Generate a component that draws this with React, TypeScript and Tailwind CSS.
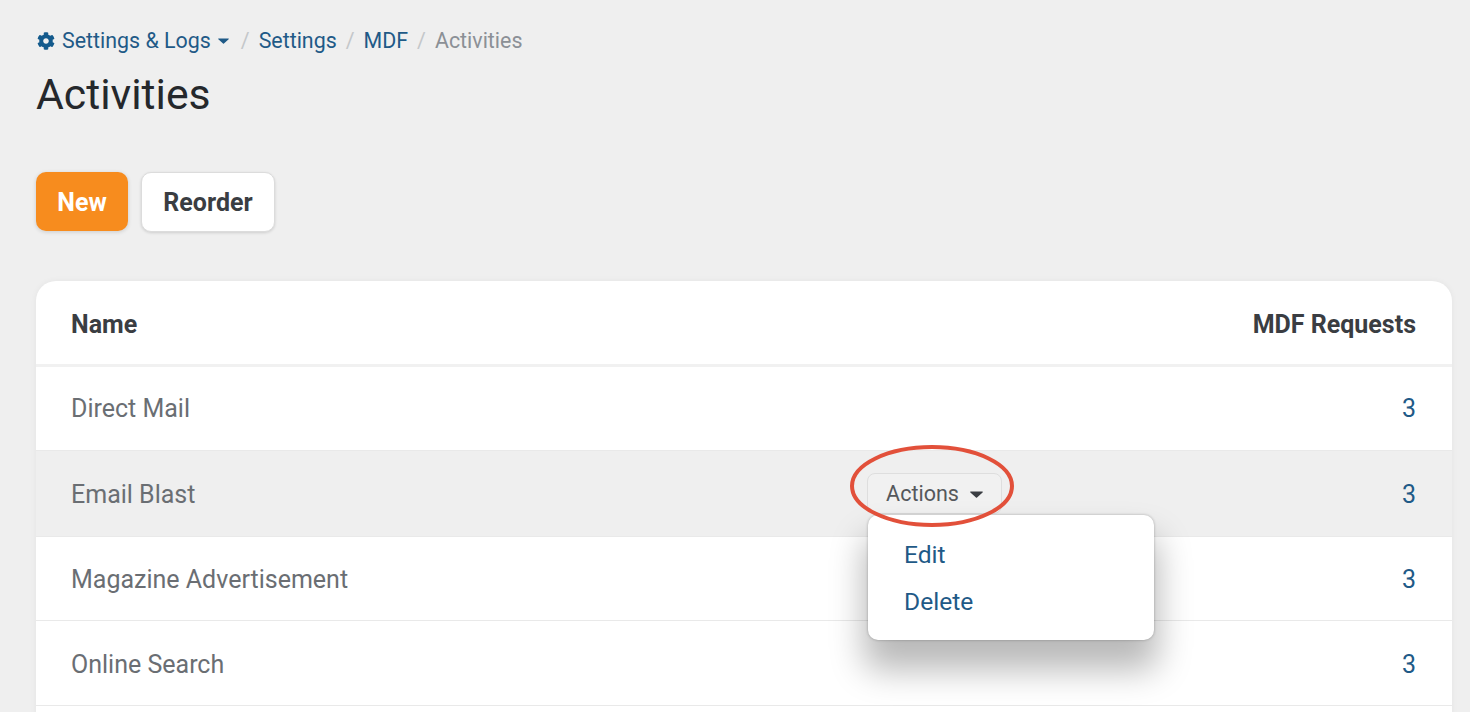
import { FaCog } from "react-icons/fa";

const rows = ["Direct Mail", "Email Blast", "Magazine Advertisement", "Online Search", ""];
const heights = ["h-[84px] pt-[1px]", "h-[86px] pt-[2px]", "h-[84px] pt-[2px]", "h-[85px] pt-[4px]", "h-[85px]"];

function Caret({ className }: { className: string }) {
  return (
    <svg viewBox="0 0 10 6" className={className} fill="currentColor" preserveAspectRatio="none">
      <path d="M0.6 0.4h8.8c.4 0 .6.5.3.8L5.4 5.5a.6.6 0 0 1-.8 0L.3 1.2C0 .9.2.4.6.4z" />
    </svg>
  );
}

function Sep() {
  return <span className="mx-[9px] text-[#c4c7ca]">/</span>;
}

export default function App() {
  return (
    <div className="h-[712px] overflow-hidden bg-[#efefef] pl-[36px] pr-[18px] pt-[27px] font-['Roboto',sans-serif]">
      <nav className="flex h-[28px] items-center text-[21.4px] leading-[28px] text-[#1f5a87]">
        <FaCog className="mr-[7px] ml-[1px] h-[18px] w-[18px] text-[#135a8c]" />
        <span>Settings &amp; Logs</span>
        <Caret className="ml-[7px] mr-[3px] h-[6px] w-[11px]" />
        <Sep />
        <span>Settings</span>
        <Sep />
        <span>MDF</span>
        <Sep />
        <span className="text-[#8b9096]">Activities</span>
      </nav>
      <h1 className="mt-[11px] text-[42.7px] leading-[56px] font-normal text-[#25282c]">Activities</h1>
      <div className="mt-[50px] flex gap-[13px]">
        <button className="h-[59px] w-[92px] rounded-[10px] bg-[#f78c1e] pt-[3px] text-[25px] font-bold text-white shadow-[0_1px_4px_rgba(0,0,0,0.15)]">
          New
        </button>
        <button className="h-[60px] w-[134px] rounded-[10px] border border-[#dcdcdc] bg-white pt-[1px] text-[25px] font-bold text-[#3a3d42] shadow-[0_1px_3px_rgba(0,0,0,0.14)]">
          Reorder
        </button>
      </div>
      <div className="relative mt-[49px] rounded-t-[20px] bg-white shadow-[0_0_6px_rgba(0,0,0,0.05)]">
        <div className="flex h-[83px] items-center justify-between pl-[35px] pr-[36px] pt-[5px] text-[25px] font-bold text-[#3a3d42]">
          <span>Name</span>
          <span>MDF Requests</span>
        </div>
        <div className="h-[3px] bg-[#f1f1f1]" />
        {rows.map((r, i) => (
          <div
            key={i}
            className={`relative flex items-center justify-between border-b border-[#e9e9e9] pl-[35px] pr-[36px] text-[25px] text-[#6a6e73] ${heights[i]} ${i === 1 ? "bg-[#efefef]" : ""}`}
          >
            {r && <span>{r}</span>}
            {r && <span className="text-[#1f5a87]">3</span>}
            {i === 1 && (
              <>
                <button className="absolute left-[831px] top-[22px] flex h-[41px] w-[135px] items-center justify-center gap-[11px] rounded-[8px] border border-[#dedede] bg-[#f1f1f1] pt-[2px] text-[21.5px] text-[#55585c]">
                  Actions
                  <Caret className="h-[7px] w-[13px] text-[#3a3d42]" />
                </button>
                <div className="absolute left-[832px] top-[64px] z-10 flex h-[125px] w-[286px] flex-col rounded-[10px] bg-white pl-[36px] pt-[24px] text-[24.6px] leading-[47px] text-[#1f5a87] shadow-[0_0_3px_rgba(0,0,0,0.28),0_26px_34px_4px_rgba(0,0,0,0.28)]">
                  <span className="-mt-[8px]">Edit</span>
                  <span>Delete</span>
                </div>
                <svg className="absolute left-[812px] top-[-8px] z-20 h-[90px] w-[168px]" viewBox="0 0 168 90" fill="none">
                  <ellipse cx="84" cy="43" rx="80" ry="39" stroke="#e2503a" strokeWidth="4" />
                </svg>
              </>
            )}
          </div>
        ))}
      </div>
    </div>
  );
}
